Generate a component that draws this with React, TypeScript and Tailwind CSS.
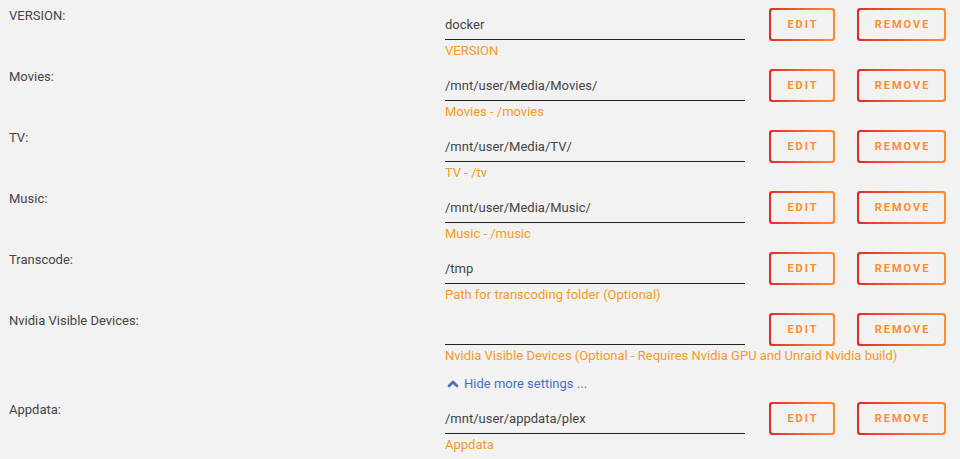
import { ChevronUp } from "lucide-react";

type Setting = {
    label: string;
    value: string;
    description: string;
};

const settings: Setting[] = [
    { label: "VERSION:", value: "docker", description: "VERSION" },
    { label: "Movies:", value: "/mnt/user/Media/Movies/", description: "Movies - /movies" },
    { label: "TV:", value: "/mnt/user/Media/TV/", description: "TV - /tv" },
    { label: "Music:", value: "/mnt/user/Media/Music/", description: "Music - /music" },
    { label: "Transcode:", value: "/tmp", description: "Path for transcoding folder (Optional)" },
    {
        label: "Nvidia Visible Devices:",
        value: "",
        description: "Nvidia Visible Devices (Optional - Requires Nvidia GPU and Unraid Nvidia build)",
    },
];

const appdata: Setting = { label: "Appdata:", value: "/mnt/user/appdata/plex", description: "Appdata" };

function GradientButton({ text, width }: { text: string; width: string }) {
    return (
        <div className={`${width} h-[33px] rounded-[3px] p-[2px] bg-gradient-to-r from-[#e22828] to-[#ff8c2f]`}>
            <div className="w-full h-full rounded-[2px] bg-[#f2f2f2] flex items-center justify-center text-[11px] font-bold tracking-[2px] text-[#ff8c2f] pl-[2px] pt-[2px]">
                {text}
            </div>
        </div>
    );
}

function SettingRow({ setting }: { setting: Setting }) {
    return (
        <div className="flex h-[61px]">
            <div className="w-[445px] pl-[9px] pt-[7px] text-[13px] leading-[18px] text-[#444]">{setting.label}</div>
            <div className="w-[300px]">
                <div className="h-[40px] border-b border-[#222] pt-[16px] text-[13px] leading-[18px] text-[#444]">
                    {setting.value}
                </div>
                <div className="pt-[2px] text-[13px] leading-[18px] text-[#f29b1d] whitespace-nowrap">
                    {setting.description}
                </div>
            </div>
            <div className="flex gap-[22px] ml-[24px] pt-[8px]">
                <GradientButton text="EDIT" width="w-[66px]" />
                <GradientButton text="REMOVE" width="w-[89px]" />
            </div>
        </div>
    );
}

export default function App() {
    return (
        <div className="w-[960px] h-[459px] overflow-hidden bg-[#f2f2f2] font-['Roboto',sans-serif]">
            {settings.map((s) => (
                <SettingRow key={s.label} setting={s} />
            ))}
            <div className="h-[28px] pl-[445px] pt-[8px] flex items-center gap-[3px] text-[13px] text-[#4a6fc1]">
                <ChevronUp className="w-[16px] h-[16px]" strokeWidth={4} />
                <span>Hide more settings ...</span>
            </div>
            <SettingRow setting={appdata} />
        </div>
    );
}
